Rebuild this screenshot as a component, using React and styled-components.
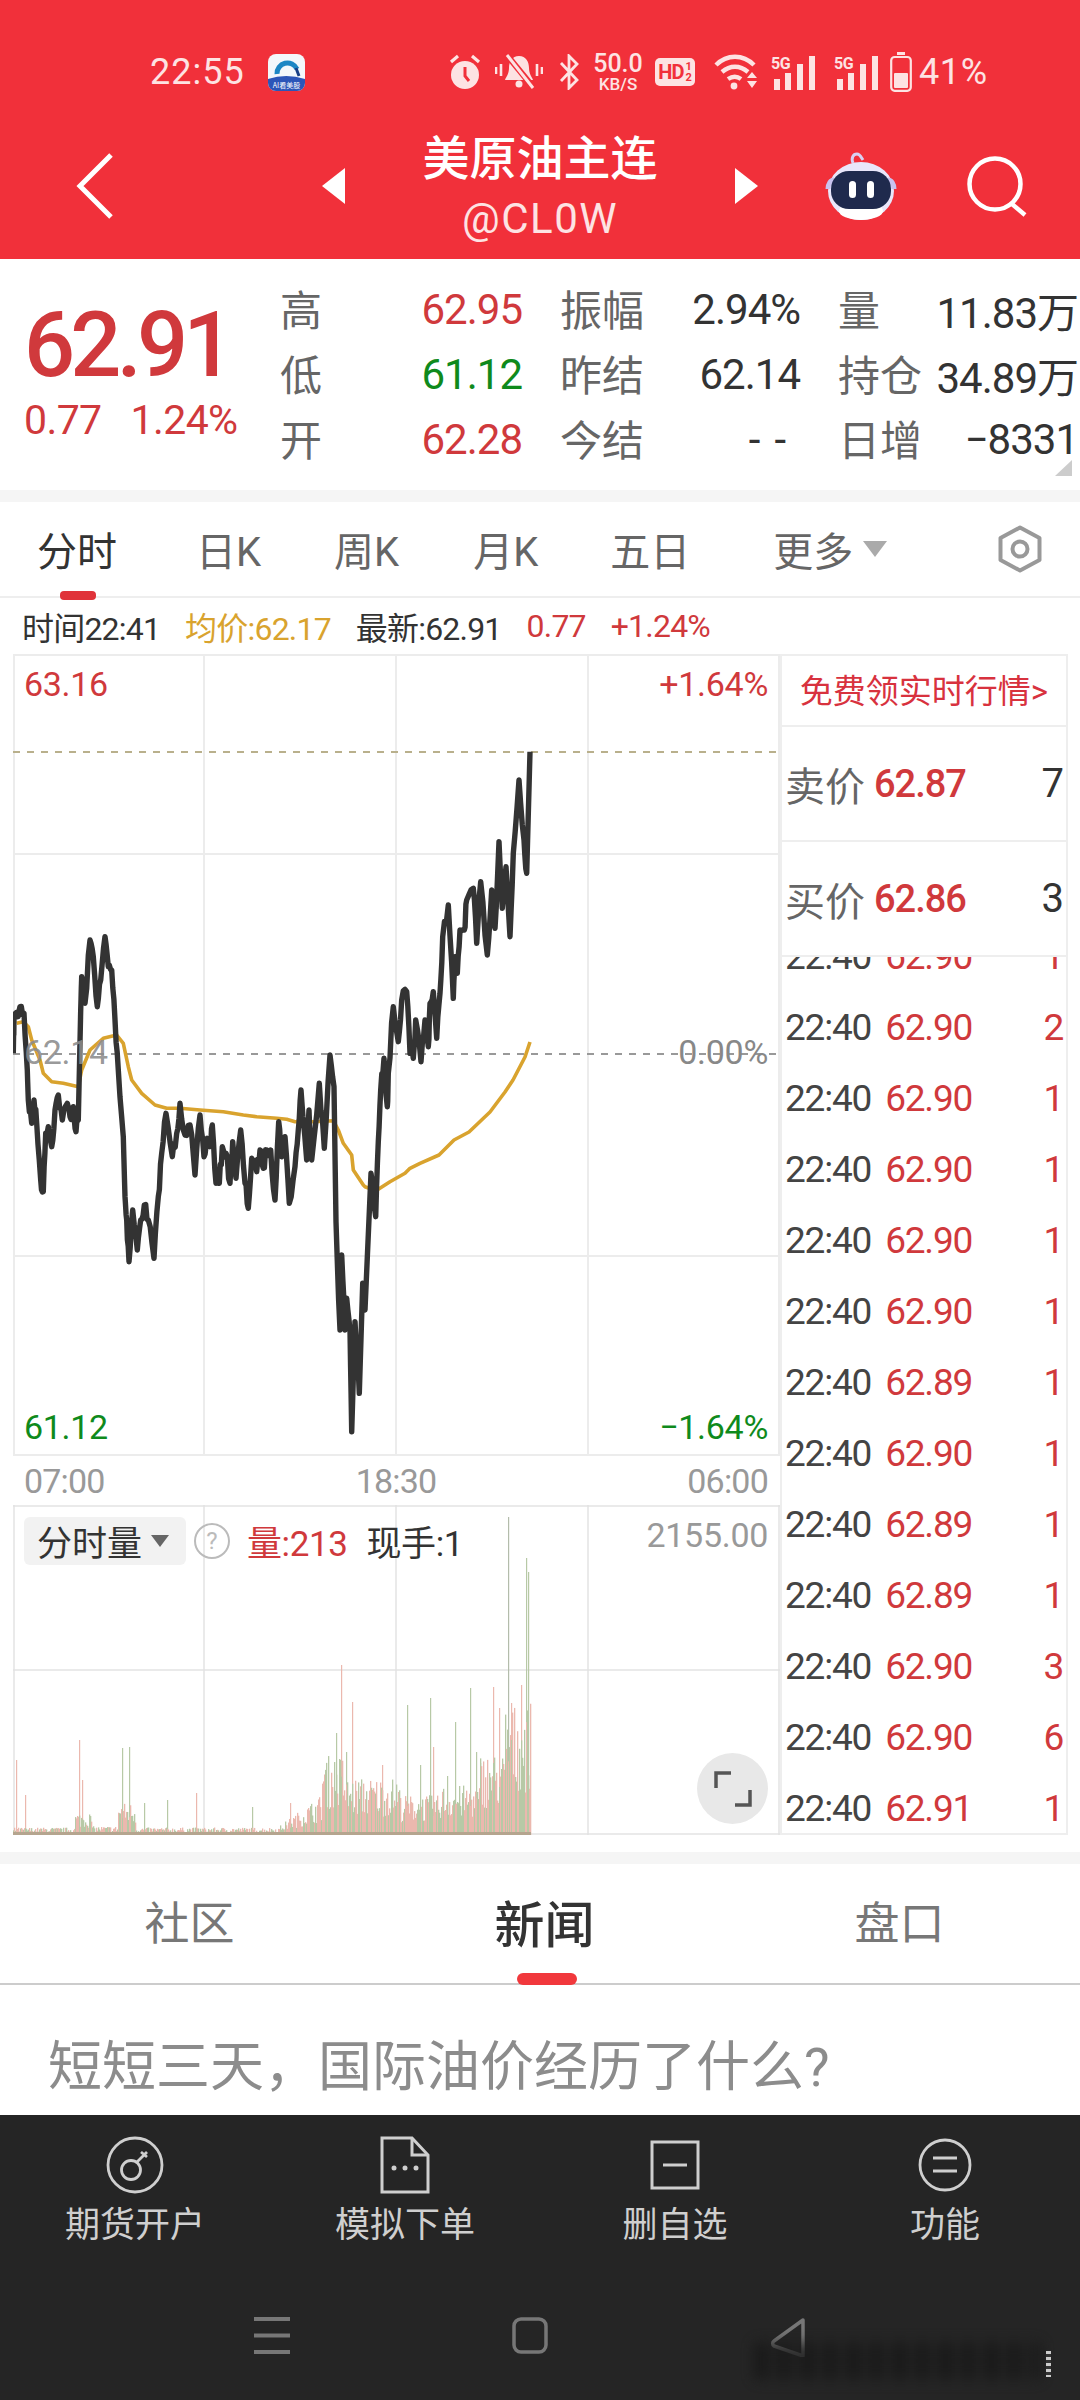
import React from 'react';
import styled, { createGlobalStyle } from 'styled-components';

const RED = '#d0393c';
const GREEN = '#0f8a1c';
const GOLD = '#d9a32e';
const PALE = '#fde3e3';
const FONT = 'Roboto, "Noto Sans CJK SC", sans-serif';

const Global = createGlobalStyle`
  html, body { margin: 0; padding: 0; background: #fff; }
  body { font-family: ${FONT}; }
  * { box-sizing: border-box; }
`;

const Page = styled.div`
  width: 1080px; height: 2400px; overflow: hidden; display: flex; flex-direction: column; background: #fff;
`;

/* header */
const Header = styled.header`
  height: 259px; background: #f1303a; display: flex; flex-direction: column; flex: none;
`;
const StatusBar = styled.div`
  height: 130px; padding: 14px 0 0 150px; display: flex; align-items: center; color: ${PALE};
`;
const Clock = styled.span`
  font-size: 36px; letter-spacing: 1px; width: 118px; flex: none;
`;
const StatusSlot = styled.div`
  flex: none; margin-left: ${p => p.$ml || 0}px; display: flex; align-items: center; justify-content: center;
`;
const Speed = styled.div`
  display: flex; flex-direction: column; align-items: center; width: 50px; color: ${PALE};
`;
const SpeedValue = styled.span`font-size: 25px; line-height: 24px; font-weight: 500;`;
const SpeedUnit = styled.span`font-size: 17px; line-height: 17px; font-weight: 500;`;
const HdBadge = styled.div`
  width: 40px; height: 28px; border-radius: 5px; background: ${PALE}; color: #f1303a; display: flex; align-items: center;
  justify-content: center; font-size: 20px; font-weight: 700; letter-spacing: -1px; gap: 2px;
`;
const HdFrac = styled.div`
  display: flex; flex-direction: column; font-size: 11px; line-height: 11px; letter-spacing: 0;
`;
const Pct = styled.span`font-size: 36px; margin-left: 7px; letter-spacing: .6px;`;

const NavBar = styled.div`
  height: 129px; display: flex; align-items: center; padding-bottom: 18px;
`;
const BackSlot = styled.div`width: 322px; padding-left: 76px; flex: none; display: flex;`;
const TitleBlock = styled.div`
  width: 390px; flex: none; display: flex; flex-direction: column; align-items: center; color: #fff;
`;
const Title = styled.div`font-size: 47px; line-height: 66px; font-weight: 500;`;
const Sub = styled.div`font-size: 42px; line-height: 54px; color: ${PALE}; letter-spacing: 1.5px;`;
const NavIcon = styled.div`flex: none; display: flex; margin-left: ${p => p.$ml}px;`;

/* quote */
const Quote = styled.section`
  height: 231px; padding-top: 19px; display: flex; flex: none;
`;
const PriceBlock = styled.div`
  width: 280px; flex: none; padding: 0 0 0 24px; display: flex; flex-direction: column; color: ${RED};
`;
const MainPrice = styled.div`
  font-size: 90px; line-height: 100px; margin-top: 18px; font-weight: 500; letter-spacing: -4.8px;
`;
const MainChange = styled.div`
  display: flex; gap: 29px; font-size: 41px; line-height: 48px; letter-spacing: -.6px;
`;
const Stats = styled.div`
  display: grid; grid-template-columns: 60px 182px 128px 150px 128px 150px; grid-auto-rows: 65px; align-items: center;
`;
const StatLabel = styled.div`
  font-size: 42px; color: #666; margin: -6px 0 0 ${p => p.$first ? 0 : 38}px; white-space: nowrap;
`;
const StatValue = styled.div`
  font-size: 42px; text-align: right; margin-top: -3px; letter-spacing: ${p => p.$wide ? '14px' : '-1px'}; color: ${p => p.$c || '#333'}; white-space: nowrap;
`;
const CornerMark = styled.div`
  position: absolute; left: 1055px; top: 460px; width: 0; height: 0;
  border-left: 17px solid transparent; border-bottom: 16px solid #ccc;
`;
const Gap = styled.div`height: ${p => p.$h}px; background: ${p => p.$c || '#f5f5f5'}; flex: none;`;

/* period tabs */
const Periods = styled.nav`
  height: 96px; flex: none; border-bottom: 2px solid #eee; padding: 0 0 0 37px; display: flex; align-items: center; position: relative;
`;
const Period = styled.div`
  font-size: 40px; color: ${p => p.$on ? '#333' : '#666'}; margin-left: ${p => p.$ml}px; position: relative; white-space: nowrap;
`;
const PeriodMark = styled.div`
  position: absolute; left: 23px; bottom: -22px; width: 36px; height: 9px; border-radius: 4px; background: #e0333a;
`;
const Caret = styled.div`
  width: 0; height: 0; margin-left: ${p => p.$ml || 10}px;
  border-left: ${p => p.$s}px solid transparent; border-right: ${p => p.$s}px solid transparent; border-top: ${p => p.$s * 1.4}px solid ${p => p.$c};
`;
const HexSlot = styled.div`margin-left: 110px; display: flex;`;

/* info row */
const InfoRow = styled.div`
  height: 56px; flex: none; display: flex; align-items: center; padding-left: 22px; gap: 25px; font-size: 32px; letter-spacing: -.8px;
`;
const Info = styled.span`color: ${p => p.$c || '#333'}; white-space: nowrap;`;

/* chart area */
const ChartRow = styled.section`
  height: 1181px; flex: none; display: flex; padding-left: 13px;
`;
const ChartCol = styled.div`
  width: 767px; flex: none; display: flex; flex-direction: column;
`;
const Plot = styled.div`
  position: relative; height: ${p => p.$h}px; flex: none;
  svg { display: block; }
`;
const PlotLabel = styled.span`
  position: absolute; font-size: 34px; line-height: 40px; letter-spacing: -.3px; color: ${p => p.$c};
  ${p => p.$l !== undefined ? `left:${p.$l}px;` : `right:${p.$r}px;`} top: ${p => p.$t}px;
`;
const Axis = styled.div`
  height: 49px; flex: none; display: flex; justify-content: space-between; align-items: center; padding: 0 12px 0 11px;
  font-size: 34px; color: #999; letter-spacing: -.8px;
`;
const VolHead = styled.div`
  position: absolute; left: 11px; top: 10px; display: flex; align-items: center; font-size: 35px; color: #333;
`;
const VolChip = styled.div`
  width: 162px; height: 48px; background: #f2f2f2; border-radius: 6px; display: flex; align-items: center; padding-left: 13px; white-space: nowrap;
`;
const HelpMark = styled.div`
  width: 36px; height: 36px; margin-left: 8px; border-radius: 50%; border: 2.5px solid #bbb; color: #bbb; font-size: 24px;
  display: flex; align-items: center; justify-content: center;
`;
const VolText = styled.span`
  color: ${p => p.$c}; margin-left: ${p => p.$ml}px; white-space: nowrap; letter-spacing: -.4px;
`;
const Expand = styled.div`
  position: absolute; left: 684px; top: 248px; width: 71px; height: 71px; border-radius: 50%; background: #e8e8e8;
  display: flex; align-items: center; justify-content: center;
`;

/* right panel */
const Panel = styled.aside`
  width: 288px; flex: none; display: flex; flex-direction: column; border-left: 2px solid #eee; border-right: 2px solid #eee; border-bottom: 2px solid #eee; overflow: hidden;
`;
const Promo = styled.div`
  height: 73px; flex: none; display: flex; align-items: center; justify-content: center; font-size: 33px; color: #d8323e; border-bottom: 2px solid #eee; border-top: 2px solid #eee; white-space: nowrap; padding: 0 0 4px 0; letter-spacing: 0;
`;
const Book = styled.div`
  height: 115px; flex: none; display: flex; align-items: center; padding: 0 2px 0 3px; border-bottom: 2px solid #eee;
`;
const BookLabel = styled.span`font-size: 40px; color: #666; white-space: nowrap;`;
const BookPrice = styled.span`font-size: 38px; color: ${RED}; margin-left: 9px; flex: 1; font-weight: 500; letter-spacing: -1px;`;
const BookQty = styled.span`font-size: 40px; color: #333;`;
const Trades = styled.div`flex: 1; overflow: hidden; display: flex; flex-direction: column;`;
const Trade = styled.div`
  height: 71px; flex: none; display: flex; align-items: center; padding: 0 3px; font-size: 37px; letter-spacing: -1.2px; color: #444;
  &:first-child { margin-top: -36px; }
`;
const TradePrice = styled.span`color: ${RED}; margin-left: 14px; flex: 1;`;
const TradeQty = styled.span`color: ${RED};`;

/* news tabs */
const NewsTabs = styled.nav`
  height: 121px; flex: none; display: grid; grid-template-columns: repeat(3, 355px); padding: 0 0 0 12px; border-bottom: 2px solid #ccc; align-items: center;
`;
const NewsTab = styled.div`
  text-align: center; position: relative; font-size: ${p => p.$on ? 50 : 45}px; color: ${p => p.$on ? '#333' : '#777'}; font-weight: ${p => p.$on ? 500 : 400}; padding-bottom: 6px;
`;
const NewsMark = styled.div`
  position: absolute; left: 50%; margin-left: -28px; bottom: -22px; width: 60px; height: 12px; border-radius: 6px; background: #f1383c;
`;
const Headline = styled.div`
  height: 130px; flex: none; padding: 50px 0 0 48px; font-size: 54px; line-height: 66px; color: #8c8c8c; white-space: nowrap; overflow: hidden;
`;

/* footer */
const Footer = styled.footer`
  flex: 1; background: #252525; display: flex; flex-direction: column; position: relative;
`;
const Actions = styled.div`
  display: grid; grid-template-columns: repeat(4, 270px); padding-top: 20px;
`;
const Action = styled.div`
  display: flex; flex-direction: column; align-items: center; color: #cfcfcf; font-size: 35px;
`;
const ActionIcon = styled.div`height: 60px; display: flex; align-items: center; justify-content: center;`;
const ActionLabel = styled.div`margin-top: 5px; line-height: 52px;`;
const SysNav = styled.div`
  display: grid; grid-template-columns: 254px 258px 258px auto; padding-top: 65px; justify-items: start;
`;
const Smudge = styled.div`
  position: absolute; left: 755px; top: 228px; width: 285px; height: 36px; filter: blur(7px); opacity: .8;
  background: repeating-linear-gradient(90deg, #141414 0 14px, #262626 14px 24px, #101010 24px 34px, #242424 34px 46px);
`;
const SmudgeDots = styled.div`
  position: absolute; left: 1046px; top: 236px; width: 5px; height: 26px;
  background: repeating-linear-gradient(180deg, #ccc 0 3px, #333 3px 6px);
`;

/* status icons */
const Alarm = () => (
  <svg width="32" height="36" viewBox="0 0 32 36">
    <circle cx="16" cy="21" r="14" fill={PALE} />
    <path d="M16 13v9l4 5" stroke="#f1303a" strokeWidth="3" fill="none" />
    <path d="M2 8l7-6M30 8l-7-6" stroke={PALE} strokeWidth="3.2" fill="none" />
  </svg>
);
const MuteBell = () => (
  <svg width="48" height="38" viewBox="0 0 48 38">
    <path d="M24 3c-7 0-10 6-10 12 0 6-3 9-4 12h28c-1-3-4-6-4-12 0-6-3-12-10-12z" fill={PALE} />
    <circle cx="24" cy="31" r="3.5" fill={PALE} />
    <path d="M11 1l27 33" stroke="#f1303a" strokeWidth="6" />
    <path d="M12 2l26 33" stroke={PALE} strokeWidth="3" />
    <path d="M1 14v7M6 11v12M42 11v12M47 14v7" stroke={PALE} strokeWidth="2.6" />
  </svg>
);
const Bluetooth = () => (
  <svg width="22" height="36" viewBox="0 0 22 36">
    <path d="M3 9l16 17-8 8V2l8 8L3 27" stroke={PALE} strokeWidth="2.8" fill="none" />
  </svg>
);
const Wifi = () => (
  <svg width="44" height="36" viewBox="0 0 44 36">
    <path d="M2 11c11-11 27-11 38 0" stroke={PALE} strokeWidth="4.4" fill="none" />
    <path d="M8 18c8-7 18-7 26 0" stroke={PALE} strokeWidth="4.4" fill="none" />
    <path d="M14 25c4.500-3 9-3 13 0" stroke={PALE} strokeWidth="4.4" fill="none" />
    <circle cx="20" cy="32" r="3.4" fill={PALE} />
    <path d="M38 18l5 6h-10zM38 34l5-7h-10z" fill={PALE} />
  </svg>
);
const Signal = () => (
  <svg width="46" height="36" viewBox="0 0 46 36">
    <text x="0" y="15" fontSize="16" fontWeight="700" fill={PALE} fontFamily="Roboto, sans-serif" letterSpacing="-.5">5G</text>
    <rect x="3" y="25" width="6" height="11" fill={PALE} />
    <rect x="14" y="19" width="6" height="17" fill={PALE} />
    <rect x="26" y="10" width="6" height="26" fill={PALE} />
    <rect x="38" y="2" width="6" height="34" fill={PALE} />
  </svg>
);
const Battery = () => (
  <svg width="22" height="40" viewBox="0 0 22 40">
    <path d="M7 1.500h8" stroke={PALE} strokeWidth="3" />
    <rect x="1.200" y="5" width="19.600" height="33.800" rx="3.500" fill="none" stroke={PALE} strokeWidth="2.2" />
    <rect x="4" y="21" width="14" height="15" rx="1" fill={PALE} />
  </svg>
);
const AppBadge = () => (
  <svg width="37" height="37" viewBox="0 0 37 37">
    <rect width="37" height="37" rx="8" fill="#f3f7fb" />
    <path d="M0 25q18-6 37 0v4a8 8 0 0 1-8 8H8a8 8 0 0 1-8-8z" fill="#2c55b8" />
    <path d="M9 20a10.500 10.500 0 0 1 20-5" stroke="#1c86c4" strokeWidth="5" fill="none" />
    <path d="M28 14l3 8" stroke="#173f86" strokeWidth="3" />
    <text x="18.500" y="34" textAnchor="middle" fontSize="7" fill="#fff" fontFamily="Noto Sans CJK SC, sans-serif">AI看美股</text>
  </svg>
);

/* nav icons */
const Chevron = () => (
  <svg width="38" height="66" viewBox="0 0 38 66">
    <path d="M35 2L4 33l31 31" stroke="#fff" strokeWidth="5" fill="none" strokeLinejoin="miter" />
  </svg>
);
const Tri = ({ left }) => (
  <svg width="23" height="36" viewBox="0 0 23 36">
    <path d={left ? 'M23 0v36L0 18z' : 'M0 0v36l23-18z'} fill="#fff" />
  </svg>
);
const Robot = () => (
  <svg width="72" height="70" viewBox="0 0 72 70">
    <path d="M28 12c-2-5 0-9 4-9 3 0 4 3 6 6" stroke="#d8d0f2" strokeWidth="3" fill="none" />
    <ellipse cx="36" cy="40" rx="33" ry="29" fill="#e9e6fa" />
    <ellipse cx="36" cy="60" rx="22" ry="9" fill="#fff" />
    <path d="M3 38a6 9 0 0 1 6-9M69 38a6 9 0 0 0-6-9" stroke="#c9c2ee" strokeWidth="5" fill="none" />
    <rect x="6" y="20" width="60" height="38" rx="18" fill="#1f2a4d" />
    <rect x="24" y="30" width="7" height="17" rx="3.500" fill="#fff" />
    <rect x="42" y="30" width="7" height="17" rx="3.500" fill="#fff" />
  </svg>
);
const Search = () => (
  <svg width="60" height="62" viewBox="0 0 60 62">
    <circle cx="28" cy="29" r="25.500" stroke="#fff" strokeWidth="4.500" fill="none" />
    <path d="M45 49l13 11" stroke="#fff" strokeWidth="4.500" />
  </svg>
);
const Hex = () => (
  <svg width="46" height="48" viewBox="0 0 46 48">
    <path d="M23 2.500l19.500 10.500v22L23 45.500 3.500 35V13z" fill="none" stroke="#999" strokeWidth="4" strokeLinejoin="round" />
    <circle cx="23" cy="24" r="7.500" fill="none" stroke="#999" strokeWidth="4" />
  </svg>
);

/* chart data: traced in page coordinates */
const tr = (pts, ox, oy) => pts.map(([x, y]) => [ox + x / 3, oy + y / 3]);
const priceTrace = [
  ...tr([[10,400],[12,290],[22,290],[30,260],[42,280],[52,450],[55,540],[65,610],[72,540],[80,610],[92,780],[100,815],[107,640],[115,620],[125,680],[135,570],[145,525],[157,600],[172,550],[180,590],[190,560],[198,635],[205,600],[212,270],[215,170],[225,250],[240,60],[250,110],[262,260],[272,180],[285,50],[295,140],[305,150],[315,300],[325,450],[340,650],[345,830],[350,900],[357,1025],[368,870],[382,990],[392,900],[403,855],[415,900],[432,1015],[445,830],[455,700],[468,580],[487,710],[500,640]], 10, 920),
  ...tr([[0,130],[15,225],[30,195],[45,345],[60,165],[72,290],[82,235],[90,260],[97,195],[108,370],[118,370],[127,260],[138,280],[150,370],[158,245],[168,355],[182,210],[195,370],[205,445],[215,295],[230,335],[240,270],[250,325],[260,270],[272,270],[285,420],[296,185],[305,290],[315,230],[328,430],[345,320],[355,210],[363,90],[380,300],[387,150],[395,300],[418,70],[433,265]], 180, 1060),
  ...tr([[60,165],[72,260],[78,665],[90,990],[95,765],[105,990],[110,895],[120,990],[125,1295],[135,965],[148,1180],[158,850],[165,930],[183,520],[197,650],[205,425],[212,270],[222,175],[232,320]], 310, 1000),
  ...tr([[55,1000],[70,800],[85,905],[95,780],[110,755],[120,940],[130,955],[137,840],[153,965],[165,840],[175,920],[180,790],[190,755],[200,895],[210,760],[218,590],[235,495],[250,775],[255,650],[262,700],[270,570],[283,570],[290,480],[310,445],[320,610],[332,425],[352,645],[365,450],[375,565],[387,305],[397,505],[408,380],[420,590],[430,340],[447,120],[462,300],[470,400],[480,35]], 370, 740),
];
const avgTrace = [
  ...tr([[20,310],[40,305],[55,320],[65,360],[90,420],[100,460],[125,485],[160,490],[205,500],[215,450],[240,390],[280,355],[320,345],[340,370],[355,440],[365,480],[395,520],[435,555],[470,565]], 10, 920),
  ...tr([[0,145],[60,150],[130,155],[190,165],[230,170],[290,175],[320,178],[345,185],[400,185],[460,182],[475,210],[490,250],[515,285],[520,330],[550,375]], 180, 1060),
  ...tr([[165,560],[185,568],[205,568],[240,545],[285,520],[300,505],[330,490]], 310, 1000),
  [439,1155],[454,1140],[469,1132],[490,1112],[505,1092],[513,1080],[525,1057],[530,1042],
];

let seed = 7;
const rnd = () => { seed = (seed * 16807) % 2147483647; return seed / 2147483647; };

const jitter = pts => {
  const out = [];
  pts.forEach((p, i) => {
    out.push(p);
    const n = pts[i + 1];
    if (!n) return;
    if (Math.abs(n[1] - p[1]) < 110) {
      [.33, .66].forEach(f => {
        out.push([p[0] + (n[0] - p[0]) * f, p[1] + (n[1] - p[1]) * f + rnd() * 14 - 7]);
      });
    }
  });
  return out;
};
const toPoints = pts => pts.map(([x, y]) => `${x.toFixed(1)},${y.toFixed(1)}`).join(' ');
const pricePoints = toPoints(jitter(priceTrace));
const avgPoints = toPoints(avgTrace);

const envelope = x => {
  if (x < 75) return 6;
  if (x < 92) return 18;
  if (x < 118) return 7;
  if (x < 136) return 26;
  if (x < 280) return 6;
  if (x < 322) return 8 + (x - 280) * .6;
  if (x < 345) return 64;
  if (x < 400) return 46;
  if (x < 440) return 32;
  if (x < 480) return 40;
  if (x < 505) return 66;
  return 105;
};
const VOL_RED = '#ebb8ae';
const VOL_GREEN = '#b7c9a6';
const noiseBars = [];
for (let x = 13; x < 531; x += 1) {
  noiseBars.push({ x, h: Math.max(2, envelope(x) * (.4 + rnd() * .85)), c: rnd() > .5 ? VOL_RED : VOL_GREEN });
}
const spikes = [
  [16,1760,'r'],[25,1795,'r'],[79,1740,'r'],[82,1780,'r'],[122,1748,'g'],[129,1747,'g'],[144,1803,'g'],[167,1800,'g'],[196,1793,'r'],[252,1807,'g'],
  [290,1803,'r'],[336,1733,'g'],[341,1665,'r'],[352,1702,'r'],[346,1752,'g'],[382,1765,'r'],[407,1705,'g'],[430,1698,'g'],[433,1747,'r'],[420,1765,'g'],
  [447,1776,'g'],[455,1722,'g'],[470,1688,'g'],[476,1752,'g'],[480,1763,'g'],[493,1687,'r'],[499,1708,'r'],[508,1517,'k'],[511,1703,'r'],[521,1685,'r'],[526,1558,'g'],[528,1572,'g'],
];
const spikeColor = { r: VOL_RED, g: VOL_GREEN, k: '#b3bcab' };

const PriceSvg = () => (
  <svg width="767" height="802" viewBox="13 654 767 802">
    <g stroke="#ececec" strokeWidth="2">
      <path d="M14 654V1456M779 654V1456M13 655H780M13 1455H780M13 854H780M13 1256H780M204 654V1456M396 654V1456M588 654V1456" fill="none" />
    </g>
    <path d="M13 752H780" stroke="#b9b08c" strokeWidth="2" strokeDasharray="7 7" />
    <path d="M13 1054H780" stroke="#999" strokeWidth="2" strokeDasharray="7 7" />
    <polyline points={avgPoints} fill="none" stroke={GOLD} strokeWidth="3.600" strokeLinejoin="round" />
    <polyline points={pricePoints} fill="none" stroke="#333" strokeWidth="5.400" strokeLinejoin="round" />
  </svg>
);
const VolumeSvg = () => (
  <svg width="767" height="330" viewBox="13 1505 767 330">
    <path d="M13 1506H780M13 1670H780M14 1505V1835M204 1505V1835M396 1505V1835M588 1505V1835M779 1505V1835M13 1834H780" stroke="#e3e3e3" strokeWidth="1.500" fill="none" />
    {spikes.map(([x, y, c]) => <rect key={x} x={x} y={y} width="1.200" height={1835 - y} fill={spikeColor[c]} />)}
    {noiseBars.map(b => <rect key={b.x} x={b.x} y={1835 - b.h} width="1.300" height={b.h} fill={b.c} />)}
    <rect x="13" y="1832" width="518" height="3" fill="#b5a58f" />
  </svg>
);

const trades = [['62.90',1],['62.90',2],['62.90',1],['62.90',1],['62.90',1],['62.90',1],['62.89',1],['62.90',1],['62.89',1],['62.89',1],['62.90',3],['62.90',6],['62.91',1]];
const periods = [['分时',0],['日K',79],['周K',73],['月K',74],['五日',72],['更多',83]];
const stats = [
  ['高','62.95',RED,'振幅','2.94%','量','11.83万'],
  ['低','61.12',GREEN,'昨结','62.14','持仓','34.89万'],
  ['开','62.28',RED,'今结','--','日增','−8331'],
];

export default function App() {
  return (
    <Page>
      <Global />
      <Header>
        <StatusBar>
          <Clock>22:55</Clock>
          <StatusSlot><AppBadge /></StatusSlot>
          <StatusSlot $ml={144}><Alarm /></StatusSlot>
          <StatusSlot $ml={14}><MuteBell /></StatusSlot>
          <StatusSlot $ml={15}><Bluetooth /></StatusSlot>
          <StatusSlot $ml={13}><Speed><SpeedValue>50.0</SpeedValue><SpeedUnit>KB/S</SpeedUnit></Speed></StatusSlot>
          <StatusSlot $ml={12}><HdBadge>HD<HdFrac><span>1</span><span>2</span></HdFrac></HdBadge></StatusSlot>
          <StatusSlot $ml={19}><Wifi /></StatusSlot>
          <StatusSlot $ml={13}><Signal /></StatusSlot>
          <StatusSlot $ml={17}><Signal /></StatusSlot>
          <StatusSlot $ml={10}><Battery /></StatusSlot>
          <Pct>41%</Pct>
        </StatusBar>
        <NavBar>
          <BackSlot><Chevron /></BackSlot>
          <Tri left />
          <TitleBlock>
            <Title>美原油主连</Title>
            <Sub>@CL0W</Sub>
          </TitleBlock>
          <Tri />
          <NavIcon $ml={67}><Robot /></NavIcon>
          <NavIcon $ml={70}><Search /></NavIcon>
        </NavBar>
      </Header>

      <Quote>
        <PriceBlock>
          <MainPrice>62.91</MainPrice>
          <MainChange><span>0.77</span><span>1.24%</span></MainChange>
        </PriceBlock>
        <Stats>
          {stats.map(r => (
            <React.Fragment key={r[0]}>
              <StatLabel $first>{r[0]}</StatLabel>
              <StatValue $c={r[2]}>{r[1]}</StatValue>
              <StatLabel>{r[3]}</StatLabel>
              <StatValue $wide={r[4] === '--'}>{r[4]}</StatValue>
              <StatLabel>{r[5]}</StatLabel>
              <StatValue>{r[6]}</StatValue>
            </React.Fragment>
          ))}
        </Stats>
        <CornerMark />
      </Quote>
      <Gap $h={12} />

      <Periods>
        {periods.map(([t, ml], i) => (
          <Period key={t} $ml={ml} $on={i === 0}>{t}{i === 0 && <PeriodMark />}</Period>
        ))}
        <Caret $s={12} $c="#aaa" />
        <HexSlot><Hex /></HexSlot>
      </Periods>

      <InfoRow>
        <Info>时间22:41</Info>
        <Info $c={GOLD}>均价:62.17</Info>
        <Info>最新:62.91</Info>
        <Info $c={RED}>0.77</Info>
        <Info $c={RED}>+1.24%</Info>
      </InfoRow>

      <ChartRow>
        <ChartCol>
          <Plot $h={802}>
            <PriceSvg />
            <PlotLabel $l={11} $t={10} $c={RED}>63.16</PlotLabel>
            <PlotLabel $r={12} $t={10} $c={RED}>+1.64%</PlotLabel>
            <PlotLabel $l={11} $t={378} $c="rgba(140,140,140,.9)">62.14</PlotLabel>
            <PlotLabel $r={12} $t={378} $c="#888">0.00%</PlotLabel>
            <PlotLabel $l={11} $t={753} $c={GREEN}>61.12</PlotLabel>
            <PlotLabel $r={12} $t={753} $c={GREEN}>−1.64%</PlotLabel>
          </Plot>
          <Axis><span>07:00</span><span>18:30</span><span>06:00</span></Axis>
          <Plot $h={330}>
            <VolumeSvg />
            <VolHead>
              <VolChip>分时量<Caret $s={9} $c="#666" $ml={9} /></VolChip>
              <HelpMark>?</HelpMark>
              <VolText $c={RED} $ml={17}>量:213</VolText>
              <VolText $c="#333" $ml={19}>现手:1</VolText>
            </VolHead>
            <PlotLabel $r={12} $t={10} $c="#999">2155.00</PlotLabel>
            <Expand>
              <svg width="38" height="38" viewBox="0 0 38 38">
                <path d="M2 18V3h15M36 20v15H21" stroke="#555" strokeWidth="3.500" fill="none" />
              </svg>
            </Expand>
          </Plot>
        </ChartCol>
        <Panel>
          <Promo>免费领实时行情&gt;</Promo>
          <Book>
            <BookLabel>卖价</BookLabel><BookPrice>62.87</BookPrice><BookQty>7</BookQty>
          </Book>
          <Book>
            <BookLabel>买价</BookLabel><BookPrice>62.86</BookPrice><BookQty>3</BookQty>
          </Book>
          <Trades>
            {trades.map(([p, q], i) => (
              <Trade key={i}>22:40<TradePrice>{p}</TradePrice><TradeQty>{q}</TradeQty></Trade>
            ))}
          </Trades>
        </Panel>
      </ChartRow>

      <Gap $h={17} $c="#fff" />
      <Gap $h={12} />
      <NewsTabs>
        <NewsTab>社区</NewsTab>
        <NewsTab $on>新闻<NewsMark /></NewsTab>
        <NewsTab>盘口</NewsTab>
      </NewsTabs>
      <Headline>短短三天，国际油价经历了什么?</Headline>

      <Footer>
        <Actions>
          <Action>
            <ActionIcon>
              <svg width="60" height="60" viewBox="0 0 60 60">
                <circle cx="30" cy="30" r="27" fill="none" stroke="#cfcfcf" strokeWidth="2.800" />
                <circle cx="26" cy="35" r="9.500" fill="none" stroke="#cfcfcf" strokeWidth="2.800" />
                <path d="M32 27l10-10M36 17l6 5" stroke="#cfcfcf" strokeWidth="2.800" fill="none" />
              </svg>
            </ActionIcon>
            <ActionLabel>期货开户</ActionLabel>
          </Action>
          <Action>
            <ActionIcon>
              <svg width="52" height="58" viewBox="0 0 52 58">
                <path d="M3 2h30l16 17v37H3z" fill="none" stroke="#cfcfcf" strokeWidth="3" />
                <path d="M33 2v17h16" fill="none" stroke="#cfcfcf" strokeWidth="3" />
                <circle cx="15" cy="32" r="2.500" fill="#cfcfcf" /><circle cx="26" cy="32" r="2.500" fill="#cfcfcf" /><circle cx="37" cy="32" r="2.500" fill="#cfcfcf" />
              </svg>
            </ActionIcon>
            <ActionLabel>模拟下单</ActionLabel>
          </Action>
          <Action>
            <ActionIcon>
              <svg width="50" height="50" viewBox="0 0 50 50">
                <rect x="2" y="2" width="46" height="46" fill="none" stroke="#cfcfcf" strokeWidth="3" />
                <path d="M13 25h24" stroke="#cfcfcf" strokeWidth="3" />
              </svg>
            </ActionIcon>
            <ActionLabel>删自选</ActionLabel>
          </Action>
          <Action>
            <ActionIcon>
              <svg width="54" height="54" viewBox="0 0 54 54">
                <circle cx="27" cy="27" r="25" fill="none" stroke="#cfcfcf" strokeWidth="2.800" />
                <path d="M15 20h24M15 33h24" stroke="#cfcfcf" strokeWidth="3" />
              </svg>
            </ActionIcon>
            <ActionLabel>功能</ActionLabel>
          </Action>
        </Actions>
        <SysNav>
          <span />
          <svg width="36" height="37" viewBox="0 0 36 37">
            <path d="M0 2h36M0 18.500h36M0 35h36" stroke="#777" strokeWidth="4" />
          </svg>
          <svg width="36" height="37" viewBox="0 0 36 37">
            <rect x="2" y="2" width="32" height="33" rx="7" fill="none" stroke="#777" strokeWidth="3.500" />
          </svg>
          <svg width="36" height="40" viewBox="0 0 36 40">
            <path d="M33 3L4 24a3 3 0 0 0 0 5l29 10z" fill="none" stroke="#777" strokeWidth="3.500" strokeLinejoin="round" />
          </svg>
        </SysNav>
        <Smudge />
        <SmudgeDots />
      </Footer>
    </Page>
  );
}
